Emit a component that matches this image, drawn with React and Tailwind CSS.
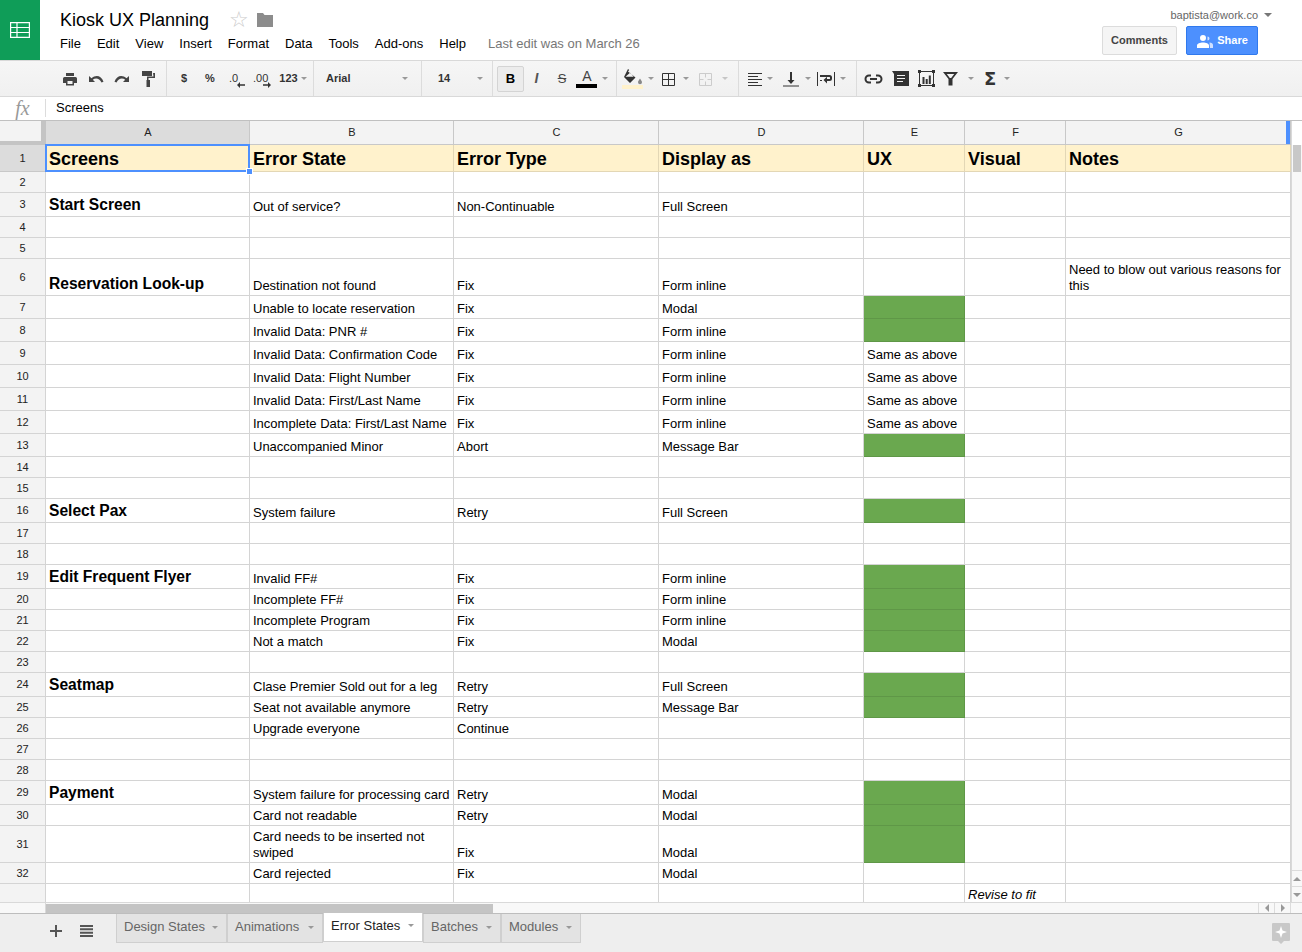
import React from 'react';

const SANS = { fontFamily: '"Liberation Sans", Arial, sans-serif' };

const columns = ['A', 'B', 'C', 'D', 'E', 'F', 'G'];

// h: row height, a-g: cell content. e === 'g' paints the UX cell green
const rows = [
  { n: 2, h: 'h-[21px]' },
  { n: 3, h: 'h-[24px]', a: 'Start Screen', b: 'Out of service?', c: 'Non-Continuable', d: 'Full Screen' },
  { n: 4, h: 'h-[21px]' },
  { n: 5, h: 'h-[21px]' },
  { n: 6, h: 'h-[37px]', a: 'Reservation Look-up', b: 'Destination not found', c: 'Fix', d: 'Form inline', g: 'Need to blow out various reasons for this' },
  { n: 7, h: 'h-[23px]', b: 'Unable to locate reservation', c: 'Fix', d: 'Modal', e: 'g' },
  { n: 8, h: 'h-[23px]', b: 'Invalid Data: PNR #', c: 'Fix', d: 'Form inline', e: 'g' },
  { n: 9, h: 'h-[23px]', b: 'Invalid Data: Confirmation Code', c: 'Fix', d: 'Form inline', e: 'Same as above' },
  { n: 10, h: 'h-[23px]', b: 'Invalid Data: Flight Number', c: 'Fix', d: 'Form inline', e: 'Same as above' },
  { n: 11, h: 'h-[23px]', b: 'Invalid Data: First/Last Name', c: 'Fix', d: 'Form inline', e: 'Same as above' },
  { n: 12, h: 'h-[23px]', b: 'Incomplete Data: First/Last Name', c: 'Fix', d: 'Form inline', e: 'Same as above' },
  { n: 13, h: 'h-[23px]', b: 'Unaccompanied Minor', c: 'Abort', d: 'Message Bar', e: 'g' },
  { n: 14, h: 'h-[21px]' },
  { n: 15, h: 'h-[21px]' },
  { n: 16, h: 'h-[24px]', a: 'Select Pax', b: 'System failure', c: 'Retry', d: 'Full Screen', e: 'g' },
  { n: 17, h: 'h-[21px]' },
  { n: 18, h: 'h-[21px]' },
  { n: 19, h: 'h-[24px]', a: 'Edit Frequent Flyer', b: 'Invalid FF#', c: 'Fix', d: 'Form inline', e: 'g' },
  { n: 20, h: 'h-[21px]', b: 'Incomplete FF#', c: 'Fix', d: 'Form inline', e: 'g' },
  { n: 21, h: 'h-[21px]', b: 'Incomplete Program', c: 'Fix', d: 'Form inline', e: 'g' },
  { n: 22, h: 'h-[21px]', b: 'Not a match', c: 'Fix', d: 'Modal', e: 'g' },
  { n: 23, h: 'h-[21px]' },
  { n: 24, h: 'h-[24px]', a: 'Seatmap', b: 'Clase Premier Sold out for a leg', c: 'Retry', d: 'Full Screen', e: 'g' },
  { n: 25, h: 'h-[21px]', b: 'Seat not available anymore', c: 'Retry', d: 'Message Bar', e: 'g' },
  { n: 26, h: 'h-[21px]', b: 'Upgrade everyone', c: 'Continue' },
  { n: 27, h: 'h-[21px]' },
  { n: 28, h: 'h-[21px]' },
  { n: 29, h: 'h-[24px]', a: 'Payment', b: 'System failure for processing card', c: 'Retry', d: 'Modal', e: 'g' },
  { n: 30, h: 'h-[21px]', b: 'Card not readable', c: 'Retry', d: 'Modal', e: 'g' },
  { n: 31, h: 'h-[37px]', b: 'Card needs to be inserted not swiped', c: 'Fix', d: 'Modal', e: 'g' },
  { n: 32, h: 'h-[21px]', b: 'Card rejected', c: 'Fix', d: 'Modal' },
  { n: '', h: 'h-[21px]', f: 'Revise to fit' },
];

const titles = ['Screens', 'Error State', 'Error Type', 'Display as', 'UX', 'Visual', 'Notes'];
const menus = ['File', 'Edit', 'View', 'Insert', 'Format', 'Data', 'Tools', 'Add-ons', 'Help'];
const tabs = [
  { name: 'Design States', w: 'w-[111px]' },
  { name: 'Animations', w: 'w-[96px]' },
  { name: 'Error States', w: 'w-[100px]', active: true },
  { name: 'Batches', w: 'w-[78px]' },
  { name: 'Modules', w: 'w-[80px]' },
];

const GRID = 'grid grid-cols-[46px_204px_204px_205px_205px_101px_101px_225px]';

const Caret = ({ className = 'ml-[5px]' }) => (
  <span className={`inline-block w-0 h-0 border-x-[3px] border-t-[3px] border-x-transparent border-t-[#999] ${className}`} />
);

// toolbar slot, centred icon with fixed width
const Slot = ({ children, w = 'w-[26px]' }) => (
  <div className={`${w} h-full flex items-center justify-center shrink-0`}>{children}</div>
);

const Icon = ({ children, w = 16, h = 16, className = '' }) => (
  <svg width={w} height={h} viewBox={`0 0 ${w} ${h}`} className={className}>{children}</svg>
);

const PrintIcon = () => (
  <Icon>
    <path fill="#444" fillRule="evenodd" d="M4 2h8v3H4zM2.500 6h11A1.500 1.500 0 0 1 15 7.500V12h-3v2.500H4V12H1V7.500A1.500 1.500 0 0 1 2.500 6zM5.500 10v3h5v-3z" />
  </Icon>
);

const UndoIcon = ({ flip }) => (
  <Icon className={flip ? '-scale-x-100' : ''}>
    <path fill="#444" d="M1 5v6h6L4.800 8.800C7.500 6.500 11.500 7.200 13.500 11.500L15.500 10.800C13.500 4.500 7.800 3.500 3.500 7.200z" />
  </Icon>
);

const PaintIcon = () => (
  <Icon h={18}>
    <path fill="#444" d="M2 1h10v5H2zM13 3h2v5H8.500v2H10v7H6.500v-7H7V6.500h6.500z" />
  </Icon>
);

const DecimalArrow = ({ right }) => (
  <svg width="8" height="6" viewBox="0 0 8 6" className={`absolute top-[21px] ${right ? 'left-[10px]' : 'left-[8px]'}`}>
    {right ? <path fill="#333" d="M0 2.300h5V0l3 3-3 3V3.700H0z" /> : <path fill="#333" d="M8 2.300H3V0L0 3l3 3V3.700h5z" />}
  </svg>
);

const Toolbar = () => (
  <div className="flex h-[36px] pl-[57px] bg-gradient-to-b from-[#f6f6f6] to-[#f0f0f0] border-b border-[#d9d9d9] text-[#333] text-[11px]">
    <div className="flex w-[110px] border-r border-[#dcdcdc] shrink-0">
      <Slot><PrintIcon /></Slot>
      <Slot><UndoIcon /></Slot>
      <Slot><UndoIcon flip /></Slot>
      <Slot><PaintIcon /></Slot>
    </div>
    <div className="flex w-[147px] pl-[4px] border-r border-[#dcdcdc] shrink-0 font-bold">
      <Slot>$</Slot>
      <Slot>%</Slot>
      <Slot>
        <span className="relative inline-block w-[14px] h-full leading-[35px] font-normal">.0<DecimalArrow /></span>
      </Slot>
      <Slot>
        <span className="relative inline-block w-[18px] h-full leading-[35px] font-normal">.00<DecimalArrow right /></span>
      </Slot>
      <Slot w="w-[36px]"><span>123</span><Caret className="ml-[3px]" /></Slot>
    </div>
    <div className="flex items-center justify-between w-[108px] pl-[12px] pr-[13px] border-r border-[#dcdcdc] shrink-0 font-bold">
      <span>Arial</span><Caret />
    </div>
    <div className="flex items-center justify-between w-[71px] pl-[16px] pr-[9px] border-r border-[#dcdcdc] shrink-0 font-bold">
      <span>14</span><Caret />
    </div>
    <div className="flex items-center w-[124px] pl-[4px] border-r border-[#dcdcdc] shrink-0">
      <div className="w-[27px] h-[26px] flex items-center justify-center rounded-[2px] border border-[#d4d4d4] bg-[#ececec] font-bold text-[13px] text-black">B</div>
      <Slot w="w-[25px]"><span className="italic font-bold text-[14px] text-[#555]">I</span></Slot>
      <Slot w="w-[26px]"><span className="line-through text-[13px] text-[#444]">S</span></Slot>
      <div className="relative w-[24px] h-full flex justify-center shrink-0">
        <span className="text-[14px] leading-[30px] text-[#444]">A</span>
        <span className="absolute left-[1px] top-[23px] w-[21px] h-[4px] bg-black" />
      </div>
      <Caret className="ml-[3px]" />
    </div>
    <div className="flex items-center w-[122px] pl-[5px] border-r border-[#dcdcdc] shrink-0">
      <div className="relative w-[22px] h-full flex justify-center shrink-0">
        <Icon w={20} h={16} className="mt-[8px]">
          <path fill="#333" d="M5 0l1.200 1L5 2.500l7.500 6L7 14 1 8zM2.500 7.800h8.200l-3.700-4z" />
          <path fill="#888" d="M17 9.500c1.200 1.800 2 2.800 2 3.800a2 2 0 0 1-4 0c0-1 .8-2 2-3.800z" />
        </Icon>
        <span className="absolute left-0 top-[24px] w-[21px] h-[4px] bg-[#fff2cc]" />
      </div>
      <Caret className="ml-[4px]" />
      <Icon w={16} h={16} className="ml-[7px]">
        <path fill="none" stroke="#333" strokeWidth="1" d="M1.500 2.500h12v12h-12zM7.500 2.500v12M1.500 8.500h12" />
      </Icon>
      <Caret className="ml-[6px]" />
      <Icon w={16} h={16} className="ml-[9px]">
        <path fill="none" stroke="#ccc" strokeWidth="1" d="M1.500 2.500h12v12h-12zM7.500 2.500v4M7.500 10.500v4M1.500 8.500h4M9.500 8.500h4" />
      </Icon>
      <Caret className="ml-[8px] opacity-50" />
    </div>
    <div className="flex items-center w-[118px] pl-[8px] border-r border-[#dcdcdc] shrink-0">
      <Icon w={15} h={14}>
        <path stroke="#333" d="M1 1.500h14M1 4.500h10M1 7.500h14M1 10.500h10M1 13.500h14" />
      </Icon>
      <Caret className="ml-[5px]" />
      <Icon w={16} h={16} className="ml-[10px]">
        <path fill="#333" d="M7 1h2v8h2.500L8 13 4.500 9H7zM0 14.500h16v1H0z" />
      </Icon>
      <Caret className="ml-[6px]" />
      <Icon w={18} h={16} className="ml-[6px]">
        <path fill="#333" d="M0 1h1v14H0zM17 1h1v14h-1zM3 4h9.500A2.500 2.500 0 0 1 15 6.500v1A2.500 2.500 0 0 1 12.500 10H10v2.500L6.500 9 10 5.800V8h2.500a.5.5 0 0 0 .5-.5v-1a.5.5 0 0 0-.5-.5H3zM3 9h2v1H3z" />
      </Icon>
      <Caret className="ml-[5px]" />
    </div>
    <div className="flex items-center pl-[7px] shrink-0">
      <Icon w={19} h={10}>
        <path fill="none" stroke="#333" strokeWidth="2" d="M7 1.500H5a3.500 3.500 0 0 0 0 7h2M12 1.500h2a3.500 3.500 0 0 1 0 7h-2M6 5h7" />
      </Icon>
      <Icon w={17} h={15} className="ml-[9px]">
        <path fill="#333" fillRule="evenodd" d="M0 0h17v15H2V3zM5 4v1h8V4zM5 7v1h8V7zM5 10v1h6v-1z" />
      </Icon>
      <Icon w={19} h={19} className="ml-[8px]">
        <path fill="none" stroke="#333" d="M2.500 2.500h14v14h-14z" />
        <path fill="#333" d="M1 1h3v3H1zM15 1h3v3h-3zM1 15h3v3H1zM15 15h3v3h-3zM5.500 8h2v7h-2zM8.700 10h2v5h-2zM11.800 6.500h2V15h-2z" />
      </Icon>
      <Icon w={15} h={15} className="ml-[7px]">
        <path fill="#333" fillRule="evenodd" d="M0 1h15L9.500 8v6.500h-4V8zM3.800 3l3 4h1.400l3-4z" />
      </Icon>
      <Caret className="ml-[10px]" />
      <span className="ml-[10px] text-[18px] leading-none font-bold text-[#333]" style={{ fontFamily: '"DejaVu Sans", sans-serif' }}>Σ</span>
      <Caret className="ml-[8px]" />
    </div>
  </div>
);

const Header = () => (
  <div className="flex h-[61px] border-b border-[#d9d9d9]">
    <div className="w-[40px] h-[60px] bg-[#0f9d58] flex items-center justify-center shrink-0">
      <svg width="20" height="16" viewBox="0 0 20 16">
        <path fill="none" stroke="#fff" strokeWidth="1.200" d="M.6.600h18.800v14.800H.6zM.6 5.500h18.800M.6 10.500h18.800M7 .6v14.800" />
      </svg>
    </div>
    <div className="pl-[20px] flex-1 min-w-0">
      <div className="flex items-center h-[26px] mt-[7px]">
        <span className="text-[18px] leading-[26px] text-black">Kiosk UX Planning</span>
        <span className="ml-[20px] text-[22px] leading-none text-[#ccc]" style={{ fontFamily: '"DejaVu Sans", sans-serif' }}>☆</span>
        <svg width="16" height="14" viewBox="0 0 16 14" className="ml-[8px]">
          <path fill="#8c8c8c" d="M0 0h6l1.500 2H16v12H0z" />
        </svg>
      </div>
      <div className="flex items-center h-[20px] mt-[1px] text-[13px] gap-[16px] text-black">
        {menus.map((m) => <span key={m}>{m}</span>)}
        <span className="ml-[6px] text-[#777]">Last edit was on March 26</span>
      </div>
    </div>
    <div className="flex flex-col items-end shrink-0">
      <div className="flex items-center h-[14px] mt-[8px] mr-[30px] text-[11px] text-[#666]">
        baptista@work.co
        <span className="inline-block ml-[6px] w-0 h-0 border-x-[4px] border-t-[4px] border-x-transparent border-t-[#777]" />
      </div>
      <div className="flex mt-[4px] mr-[44px] gap-[9px]">
        <div className="w-[75px] h-[29px] flex items-center justify-center rounded-[2px] border border-[#dcdcdc] bg-[#f5f5f5] text-[11px] font-bold text-[#444]">Comments</div>
        <div className="w-[72px] h-[29px] flex items-center justify-center gap-[4px] rounded-[2px] border border-[#3079ed] bg-[#4d90fe] text-[11px] font-bold text-white">
          <svg width="17" height="14" viewBox="0 0 17 14">
            <path fill="#fff" d="M7 1a3 3 0 1 1 0 6 3 3 0 0 1 0-6zM1 14v-2.500C1 9.500 4 8.500 7 8.500s6 1 6 3V14z" />
            <path fill="#cfe0ff" d="M11.500 2.500a2 2 0 1 1 0 4zM13.500 8.500c2 .3 3.500 1.200 3.500 2.500v3h-3z" />
          </svg>
          Share
        </div>
      </div>
    </div>
  </div>
);

const FormulaBar = () => (
  <div className="flex items-center h-[24px] pb-[2px] border-b border-[#c0c0c0] bg-white">
    <div className="w-[46px] h-[18px] flex items-center justify-center border-r border-[#dcdcdc] shrink-0">
      <span className="italic text-[20px] leading-none text-[#999]" style={{ fontFamily: '"Liberation Serif", serif' }}>fx</span>
    </div>
    <span className="pl-[10px] text-[13px] text-black">Screens</span>
  </div>
);

const ColumnHeader = () => (
  <div className={`${GRID} h-[24px] text-[11px] text-[#222]`}>
    <div className="bg-[#f3f3f3] border-r-[5px] border-b-[4px] border-[#c4c4c4]" />
    {columns.map((c) => {
      const selected = c === 'A';
      return (
        <div
          key={c}
          className={`relative flex items-center justify-center pl-px border-r border-b border-[#c8c8c8] ${selected ? 'bg-[#dcdcdc]' : 'bg-[#f3f3f3]'}`}
        >
          {c}
          {c === 'G' && <span className="absolute right-0 top-0 w-[4px] h-full bg-[#4d90fe]" />}
        </div>
      );
    })}
  </div>
);

const TitleRow = () => (
  <div className={`${GRID} h-[27px]`}>
    <div className="flex items-center justify-center bg-[#dcdcdc] border-r border-b border-[#c8c8c8] text-[11px] text-[#222]">1</div>
    {titles.map((t, i) => (
      <div
        key={t}
        className="relative flex items-end pl-[3px] pb-[2px] bg-[#fff2cc] border-r border-b border-[#e3d7b5] text-[18px] leading-[20px] font-bold text-black whitespace-nowrap"
      >
        {t}
        {i === 0 && (
          <>
            <span className="absolute -left-px -top-px w-[205px] h-[28px] border-2 border-[#4d90fe]" />
            <span className="absolute right-[-4px] bottom-[-4px] w-[7px] h-[7px] bg-[#4d90fe] border border-white z-10" />
          </>
        )}
      </div>
    ))}
  </div>
);

const Cell = ({ children, className = '' }) => (
  <div className={`flex items-end pl-[3px] pr-[3px] pb-[1px] border-r border-b border-[#d4d4d4] text-[13px] leading-[16px] text-black ${className}`}>
    <span>{children}</span>
  </div>
);

const Row = ({ row }) => (
  <div className={`${GRID} ${row.h} shrink-0`}>
    <div className="flex items-center justify-center bg-[#f3f3f3] border-r border-b border-[#d4d4d4] text-[11px] text-[#222]">{row.n}</div>
    <div className="flex items-end pl-[3px] pb-[2px] border-r border-b border-[#d4d4d4] text-[15.600px] leading-[18px] font-bold text-black whitespace-nowrap">
      {row.a}
    </div>
    <Cell className="whitespace-normal">{row.b}</Cell>
    <Cell>{row.c}</Cell>
    <Cell>{row.d}</Cell>
    {row.e === 'g' ? (
      <div className="bg-[#6aa84f] border-r border-b border-[#5f9747]" />
    ) : (
      <Cell>{row.e}</Cell>
    )}
    <Cell className="italic">{row.f}</Cell>
    <Cell>{row.g}</Cell>
  </div>
);

const Scrollbar = () => (
  <div className="w-[11px] shrink-0 flex flex-col bg-[#f8f8f8] border-l border-[#d9d9d9]">
    <div className="h-[24px] bg-white" />
    <div className="h-[27px] mx-px bg-[#c8c8c8]" />
    <div className="flex-1" />
    <div className="h-[16px] flex items-center justify-center border-t border-[#dcdcdc]">
      <span className="w-0 h-0 border-x-[4px] border-b-[4px] border-x-transparent border-b-[#999]" />
    </div>
    <div className="h-[16px] flex items-center justify-center border-t border-[#dcdcdc]">
      <span className="w-0 h-0 border-x-[4px] border-t-[4px] border-x-transparent border-t-[#999]" />
    </div>
  </div>
);

const HScroll = () => (
  <div className="flex h-[11px] bg-[#f8f8f8] border-t border-[#d9d9d9]">
    <div className="w-[46px] border-r border-[#d9d9d9] shrink-0" />
    <div className="w-[447px] h-[9px] mt-px bg-[#c4c4c4] shrink-0" />
    <div className="flex-1" />
    <div className="w-[16px] flex items-center justify-center border-l border-[#dcdcdc]">
      <span className="w-0 h-0 border-y-[4px] border-r-[4px] border-y-transparent border-r-[#999]" />
    </div>
    <div className="w-[16px] flex items-center justify-center border-l border-[#dcdcdc]">
      <span className="w-0 h-0 border-y-[4px] border-l-[4px] border-y-transparent border-l-[#999]" />
    </div>
    <div className="w-[12px] border-l border-[#dcdcdc]" />
  </div>
);

const SheetTabs = () => (
  <div className="flex flex-1 bg-[#eeeeee] border-t border-[#bdbdbd]">
    <div className="flex items-center h-[33px] w-[116px] pl-[50px] shrink-0">
      <svg width="12" height="12" viewBox="0 0 12 12">
        <path fill="#555" d="M5 0h2v5h5v2H7v5H5V7H0V5h5z" />
      </svg>
      <svg width="13" height="12" viewBox="0 0 13 12" className="ml-[18px]">
        <path fill="#555" d="M0 0h13v2H0zM0 3.300h13v2H0zM0 6.700h13v2H0zM0 10h13v2H0z" />
      </svg>
    </div>
    <div className="flex items-start">
      {tabs.map((t) => (
        <div
          key={t.name}
          className={`${t.w} h-[29px] flex items-center justify-between pl-[7px] pr-[8px] border-l border-r border-b border-[#cfcfcf] text-[13px] ${t.active ? 'bg-white text-[#222] -mt-px pb-[3px]' : 'bg-[#e3e3e3] text-[#666] pb-[2px]'}`}
        >
          <span>{t.name}</span>
          <Caret />
        </div>
      ))}
    </div>
    <div className="flex-1" />
    <svg width="18" height="21" viewBox="0 0 18 21" className="mt-[9px] mr-[12px]">
      <path fill="#c8c8c8" d="M1 0h16a1 1 0 0 1 1 1v16a1 1 0 0 1-1 1h-5l-3 3-3-3H1a1 1 0 0 1-1-1V1a1 1 0 0 1 1-1z" />
      <path fill="#fff" d="M9 3l1.500 4.500L15 9l-4.500 1.500L9 15l-1.500-4.500L3 9l4.500-1.500z" />
    </svg>
  </div>
);

export default function App() {
  return (
    <div className="w-[1302px] h-[952px] flex flex-col overflow-hidden bg-white" style={SANS}>
      <Header />
      <Toolbar />
      <FormulaBar />
      <div className="flex h-[781px] shrink-0 overflow-hidden">
        <div className="w-[1291px] shrink-0 overflow-hidden">
          <ColumnHeader />
          <TitleRow />
          {rows.map((row, i) => <Row key={i} row={row} />)}
        </div>
        <Scrollbar />
      </div>
      <HScroll />
      <SheetTabs />
    </div>
  );
}
